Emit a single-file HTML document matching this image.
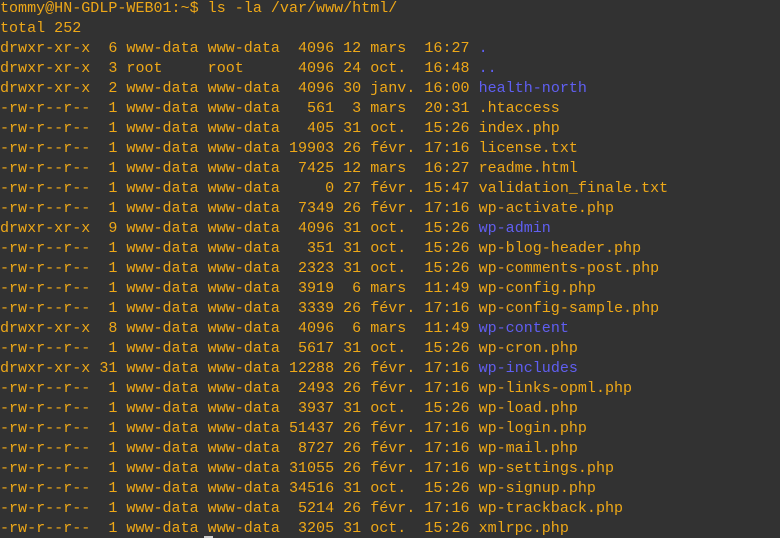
<!DOCTYPE html>
<html><head><meta charset="utf-8"><style>
html,body{margin:0;padding:0;background:#323232;width:780px;height:538px;overflow:hidden}
pre{margin:0;position:absolute;left:0;top:-2px;font-family:"Liberation Mono",monospace;font-size:15.05px;line-height:20px;color:#eea818;white-space:pre}
.b{color:#5f5ff2}
.cur{position:absolute;left:204px;top:536px;width:9px;height:2px;background:#ccc}
</style></head><body><pre>tommy@HN-GDLP-WEB01:~$ ls -la /var/www/html/
total 252
drwxr-xr-x  6 www-data www-data  4096 12 mars  16:27 <span class="b">.</span>
drwxr-xr-x  3 root     root      4096 24 oct.  16:48 <span class="b">..</span>
drwxr-xr-x  2 www-data www-data  4096 30 janv. 16:00 <span class="b">health-north</span>
-rw-r--r--  1 www-data www-data   561  3 mars  20:31 .htaccess
-rw-r--r--  1 www-data www-data   405 31 oct.  15:26 index.php
-rw-r--r--  1 www-data www-data 19903 26 févr. 17:16 license.txt
-rw-r--r--  1 www-data www-data  7425 12 mars  16:27 readme.html
-rw-r--r--  1 www-data www-data     0 27 févr. 15:47 validation_finale.txt
-rw-r--r--  1 www-data www-data  7349 26 févr. 17:16 wp-activate.php
drwxr-xr-x  9 www-data www-data  4096 31 oct.  15:26 <span class="b">wp-admin</span>
-rw-r--r--  1 www-data www-data   351 31 oct.  15:26 wp-blog-header.php
-rw-r--r--  1 www-data www-data  2323 31 oct.  15:26 wp-comments-post.php
-rw-r--r--  1 www-data www-data  3919  6 mars  11:49 wp-config.php
-rw-r--r--  1 www-data www-data  3339 26 févr. 17:16 wp-config-sample.php
drwxr-xr-x  8 www-data www-data  4096  6 mars  11:49 <span class="b">wp-content</span>
-rw-r--r--  1 www-data www-data  5617 31 oct.  15:26 wp-cron.php
drwxr-xr-x 31 www-data www-data 12288 26 févr. 17:16 <span class="b">wp-includes</span>
-rw-r--r--  1 www-data www-data  2493 26 févr. 17:16 wp-links-opml.php
-rw-r--r--  1 www-data www-data  3937 31 oct.  15:26 wp-load.php
-rw-r--r--  1 www-data www-data 51437 26 févr. 17:16 wp-login.php
-rw-r--r--  1 www-data www-data  8727 26 févr. 17:16 wp-mail.php
-rw-r--r--  1 www-data www-data 31055 26 févr. 17:16 wp-settings.php
-rw-r--r--  1 www-data www-data 34516 31 oct.  15:26 wp-signup.php
-rw-r--r--  1 www-data www-data  5214 26 févr. 17:16 wp-trackback.php
-rw-r--r--  1 www-data www-data  3205 31 oct.  15:26 xmlrpc.php</pre><div class="cur"></div></body></html>
